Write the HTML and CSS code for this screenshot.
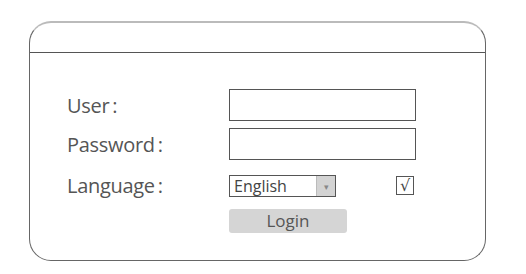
FILE: index.html
```html
<!DOCTYPE html>
<html lang="en">
<head>
    <meta charset="UTF-8">
    <meta name="viewport" content="width=device-width, initial-scale=1.0">
    <title>Login</title>
    <link rel="stylesheet" href="styles.css">
</head>
<body>
    <div class="panel">
        <div class="panel-header"></div>
        <form class="login-form">
            <div class="row row-user">
                <label class="label" for="user">User&thinsp;:</label>
                <input class="field" type="text" id="user">
            </div>
            <div class="row row-pass">
                <label class="label" for="password">Password&thinsp;:</label>
                <input class="field" type="password" id="password">
            </div>
            <div class="row row-lang">
                <label class="label">Language&thinsp;:</label>
                <div class="select">
                    <span class="select-value">English</span>
                    <span class="select-arrow">&#9662;</span>
                </div>
                <span class="check">&radic;</span>
            </div>
            <div class="row row-login">
                <span class="spacer"></span>
                <button type="button" class="login-btn">Login</button>
            </div>
        </form>
    </div>
</body>
</html>
```

FILE: styles.css
```css
body {
    margin: 0;
    background: #fff;
    font-family: "Open Sans", "Noto Sans", sans-serif;
    color: #555;
}

.panel {
    box-sizing: border-box;
    margin: 21px 0 0 29px;
    width: 457px;
    height: 240px;
    border: 1px solid #666;
    border-top: 2px solid #bbb;
    border-radius: 22px;
}

.panel-header {
    height: 29px;
    border-bottom: 1px solid #555;
}

.login-form {
    padding: 36px 0 0 37px;
}

.row {
    display: flex;
    align-items: center;
}

.label,
.spacer {
    width: 162px;
    flex: none;
}

.label {
    font-size: 20px;
    letter-spacing: -0.3px;
    color: #555;
}

.field {
    box-sizing: border-box;
    width: 187px;
    height: 32px;
    margin: 0;
    border: 1px solid #555;
    background: #fff;
    padding: 0 4px;
}

.row-pass {
    margin-top: 7px;
}

.row-lang {
    margin-top: 12px;
}

.select {
    box-sizing: border-box;
    display: flex;
    width: 107px;
    height: 22px;
    border: 1px solid #555;
}

.select-value {
    flex: 1;
    padding-left: 4px;
    font-size: 16px;
    line-height: 20px;
    color: #444;
}

.select-arrow {
    width: 18px;
    background: #d3d3d3;
    border-left: 1px solid #bbb;
    color: #888;
    font-size: 9px;
    line-height: 22px;
    text-align: center;
}

.check {
    box-sizing: border-box;
    width: 18px;
    height: 19px;
    margin-left: 60px;
    border: 1px solid #555;
    font-family: "DejaVu Sans", sans-serif;
    font-size: 16px;
    line-height: 18px;
    text-align: center;
    color: #444;
}

.row-login {
    margin-top: 10px;
}

.login-btn {
    width: 118px;
    height: 24px;
    padding: 0;
    border: none;
    border-radius: 3px;
    background: #d5d5d5;
    font-family: "Open Sans", "Noto Sans", sans-serif;
    font-size: 17px;
    line-height: 24px;
    color: #555;
}
```
